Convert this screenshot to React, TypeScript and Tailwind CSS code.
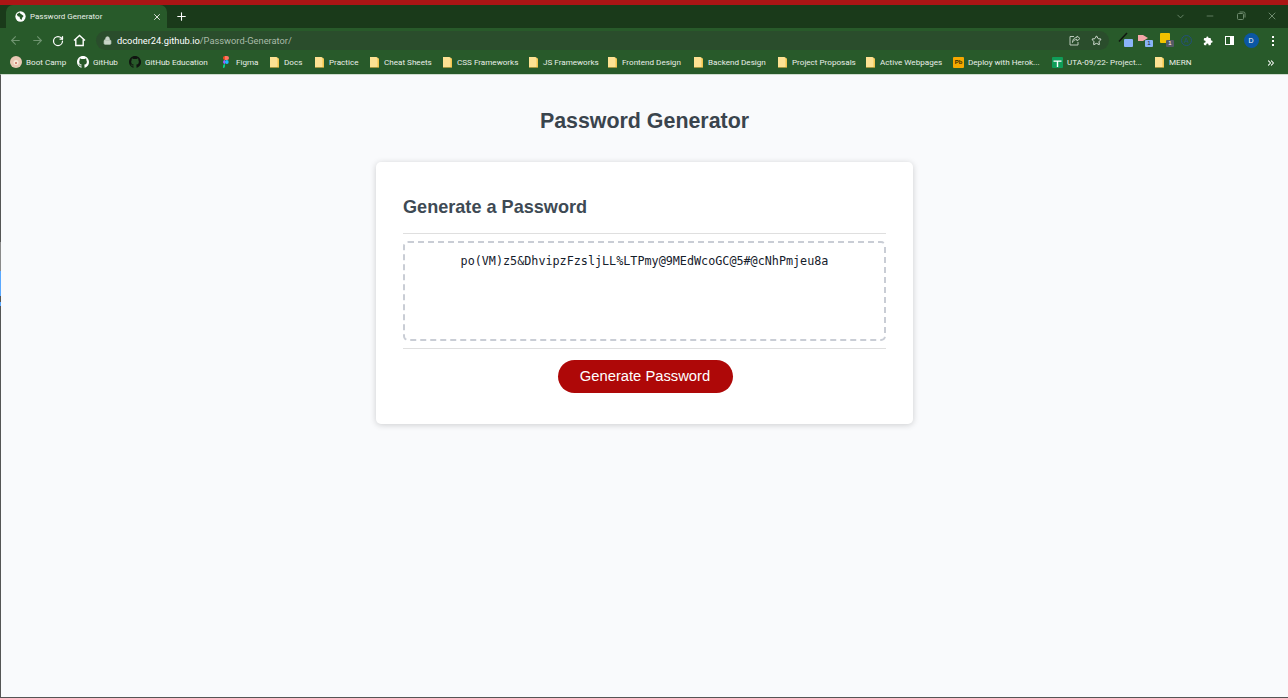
import React from 'react';
import { ArrowLeft, ArrowRight, RotateCw, Lock, Star, X, Plus, ChevronDown, Minus, ChevronsRight } from 'lucide-react';

const Folder = () => (
  <svg width="11" height="12" viewBox="0 0 11 12" className="shrink-0">
    <path d="M1 1h6.500l2.500 2v8H1z" fill="#fde293" />
    <path d="M7.500 1l2.500 2v8H8.500V2.500z" fill="#f3c64f" />
    <path d="M1 11h9v0.7H1z" fill="#d8b24a" />
  </svg>
);

const GithubMark = ({ color }: { color: string }) => (
  <svg width="12" height="12" viewBox="0 0 16 16" fill={color} className="shrink-0">
    <path d="M8 0C3.58 0 0 3.58 0 8c0 3.54 2.29 6.53 5.47 7.59.4.07.55-.17.55-.38 0-.19-.01-.82-.01-1.49-2.01.37-2.53-.49-2.69-.94-.09-.23-.48-.94-.82-1.13-.28-.15-.68-.52-.01-.53.63-.01 1.08.58 1.23.82.72 1.21 1.87.87 2.33.66.07-.52.28-.87.51-1.07-1.78-.2-3.64-.89-3.64-3.95 0-.87.31-1.59.82-2.15-.08-.2-.36-1.02.08-2.12 0 0 .67-.21 2.2.82.64-.18 1.32-.27 2-.27s1.36.09 2 .27c1.53-1.04 2.2-.82 2.2-.82.44 1.1.16 1.92.08 2.12.51.56.82 1.27.82 2.15 0 3.07-1.87 3.75-3.65 3.95.29.25.54.730.54 1.48 0 1.07-.01 1.93-.01 2.2 0 .21.15.46.55.38A8.01 8.01 0 0 0 16 8c0-4.42-3.58-8-8-8z" />
  </svg>
);

const Figma = () => (
  <svg width="12" height="12" viewBox="0 0 12 12" className="shrink-0">
    <circle cx="6.800" cy="6" r="1.900" fill="#1abcfe" />
    <path d="M3 10a2 2 0 0 1 2-2v2a1.900 1.900 0 0 1-2 2z" fill="#0acf83" />
    <path d="M3 6a2 2 0 0 1 2-2v4a2 2 0 0 1-2-2z" fill="#a259ff" />
    <path d="M3 2a2 2 0 0 1 2-2v4a2 2 0 0 1-2-2z" fill="#f24e1e" />
    <path d="M5 0h2a2 2 0 0 1 0 4H5z" fill="#ff7262" />
  </svg>
);

const bookmarks = [
  {
    label: 'Boot Camp',
    width: 'w-[67px]',
    icon: (
      <svg width="12" height="12" viewBox="0 0 12 12" className="shrink-0">
        <circle cx="6" cy="6" r="6" fill="#e9c9b4" />
        <circle cx="6" cy="6.500" r="2.500" fill="#f7ead9" />
        <circle cx="6" cy="7" r="1" fill="#c96a5a" />
      </svg>
    ),
  },
  { label: 'GitHub', width: 'w-[52px]', icon: <GithubMark color="#ffffff" /> },
  { label: 'GitHub Education', width: 'w-[91px]', icon: <GithubMark color="#101510" /> },
  { label: 'Figma', width: 'w-[49px]', icon: <Figma /> },
  { label: 'Docs', width: 'w-[45px]', icon: <Folder /> },
  { label: 'Practice', width: 'w-[55px]', icon: <Folder /> },
  { label: 'Cheat Sheets', width: 'w-[73px]', icon: <Folder /> },
  { label: 'CSS Frameworks', width: 'w-[86px]', icon: <Folder /> },
  { label: 'JS Frameworks', width: 'w-[79px]', icon: <Folder /> },
  { label: 'Frontend Design', width: 'w-[86px]', icon: <Folder /> },
  { label: 'Backend Design', width: 'w-[84px]', icon: <Folder /> },
  { label: 'Project Proposals', width: 'w-[88px]', icon: <Folder /> },
  { label: 'Active Webpages', width: 'w-[88px]', icon: <Folder /> },
  {
    label: 'Deploy with Herok...',
    width: 'w-[99px]',
    icon: <span className="w-[11px] h-[11px] rounded-[1px] bg-[#f5a800] shrink-0 text-[6px] leading-[11px] text-center font-bold text-[#3a2a00]">Pb</span>,
  },
  {
    label: 'UTA-09/22- Project...',
    width: 'w-[102px]',
    icon: (
      <svg width="11" height="11" viewBox="0 0 11 11" className="shrink-0">
        <rect width="11" height="11" rx="1" fill="#0f9d58" />
        <path d="M1.500 3.500h8v1.200H6.200V10H4.800V4.700H1.500z" fill="#fff" />
      </svg>
    ),
  },
  { label: 'MERN', width: '', icon: <Folder /> },
];

export default function App() {
  return (
    <div className="relative h-[698px] w-[1288px] overflow-hidden flex flex-col bg-[#f9fafc] font-['Liberation_Sans',sans-serif]">
      <div className="h-[5px] bg-[#ab1515]" />

      {/* tab strip */}
      <div className="h-[23px] bg-[#1a3a1a] flex items-end pl-[6px]">
        <div className="w-[161px] h-[23px] bg-[#285a2a] rounded-t-[7px] flex items-center pl-[9px] pr-[5px]">
          <svg width="11" height="11" viewBox="0 0 12 12" className="shrink-0">
            <circle cx="6" cy="6" r="5.600" fill="#fff" />
            <path d="M5 1.500l-3 2 1 2.200 2 .6.4 2 1.600 1.500 1-2.800 1.400-1.500-2-1.800L6 3z" fill="#285a2a" />
          </svg>
          <span className="ml-[4px] text-[8px] text-[#e8efe8] font-['Roboto',sans-serif]">Password Generator</span>
          <X size={10} strokeWidth={2} className="ml-auto text-white" />
        </div>
        <Plus size={13} strokeWidth={2} className="ml-[8px] mb-[5px] text-white" />
        <div className="ml-auto flex items-center mb-[6px] pr-[1px] text-[#6d8a6d]">
          <span className="w-[31px] pl-[3px] flex justify-center"><ChevronDown size={11} /></span>
          <span className="w-[31px] flex justify-center"><Minus size={10} /></span>
          <span className="w-[31px] flex justify-center">
            <svg width="10" height="10" viewBox="0 0 10 10" fill="none" stroke="#6d8a6d">
              <rect x="1.500" y="2.500" width="6" height="6" rx="1" />
              <path d="M3.500 1h4a1.500 1.500 0 0 1 1.500 1.500v4" />
            </svg>
          </span>
          <span className="w-[31px] flex justify-center"><X size={12} /></span>
        </div>
      </div>

      {/* toolbar */}
      <div className="h-[22px] bg-[#285a2a] flex items-center pl-[9px] pt-[3px]">
        <ArrowLeft size={13} className="text-[#6f9470]" />
        <ArrowRight size={13} className="ml-[9px] text-[#6f9470]" />
        <RotateCw size={12} strokeWidth={2.500} className="ml-[8px] text-white" />
        <svg width="13" height="13" viewBox="0 0 13 13" fill="none" stroke="#fff" strokeWidth="1.400" className="ml-[9px]">
          <path d="M1 6.500L6.500 1.500L12 6.500M2.800 5.500V11.500H10.200V5.500" />
        </svg>
        <div className="ml-[10px] w-[1013px] h-[19px] rounded-full bg-[#2a4d2c] flex items-center pl-[7px] pr-[6px]">
          <Lock size={9} fill="#c8d4c8" className="text-[#c8d4c8]" />
          <span className="ml-[5px] text-[9.300px] text-white font-['Roboto',sans-serif]">
            dcodner24.github.io<span className="text-[#a9bba9]">/Password-Generator/</span>
          </span>
          <svg width="12" height="11" viewBox="0 0 12 11" fill="none" stroke="#b9c8b9" className="ml-auto mr-[10px]">
            <path d="M8 1l3 2.500L8 6V4.500C5.500 4.500 4 5.500 3.500 7.500 3.500 4.500 5 2.500 8 2.500z" />
            <path d="M5 1.500H1V10h8V7" />
          </svg>
          <Star size={11} strokeWidth={2} className="text-[#e4ebe4] mr-[1px]" />
        </div>

        {/* extensions */}
        <div className="ml-[7px] flex items-center">
          <span className="relative w-[20px] h-[18px]">
            <svg width="10" height="10" viewBox="0 0 10 10" className="absolute left-[2px] top-0" stroke="#101510" strokeWidth="1.500">
              <path d="M1 9.500L9 1" />
            </svg>
            <span className="absolute left-[8px] top-[7px] w-[9px] h-[8px] bg-[#8ab4f8] rounded-[1px]" />
          </span>
          <span className="relative w-[20px] h-[18px]">
            <svg width="10" height="8" viewBox="0 0 10 8" className="absolute left-[2px] top-[2px]">
              <path d="M0 1h5l5 3-5 3H0z" fill="#f4a7a7" />
            </svg>
            <span className="absolute left-[9px] top-[8px] w-[8px] h-[7px] bg-[#8ab4f8] rounded-[1px] text-[6px] leading-[7px] text-center text-[#123]">1</span>
          </span>
          <span className="relative w-[20px] h-[18px]">
            <span className="absolute left-[4px] top-[1px] w-[10px] h-[10px] bg-[#f2c200] rounded-[1px]" />
            <span className="absolute left-[10px] top-[8px] w-[8px] h-[7px] bg-[#555a66] rounded-[1px] text-[6px] leading-[7px] text-center text-white">1</span>
          </span>
          <span className="w-[21px] flex justify-center">
            <span className="w-[11px] h-[11px] rounded-full border border-[#23507a] text-[7px] leading-[9px] text-center text-[#23507a]">A</span>
          </span>
          <span className="w-[22px] flex justify-center">
            <svg width="10" height="10" viewBox="0 0 24 24" fill="#fff">
              <path d="M20.500 11H19V7a2 2 0 0 0-2-2h-4V3.500a2.500 2.500 0 0 0-5 0V5H4a2 2 0 0 0-2 2v3.800h1.500a2.700 2.700 0 0 1 0 5.400H2V20a2 2 0 0 0 2 2h3.800v-1.500a2.700 2.700 0 0 1 5.400 0V22H17a2 2 0 0 0 2-2v-4h1.500a2.500 2.500 0 0 0 0-5z" />
            </svg>
          </span>
          <span className="w-[21px] flex justify-center">
            <span className="w-[9px] h-[9px] bg-white border border-white flex">
              <span className="w-[4px] h-[7px] bg-[#285a2a]" />
            </span>
          </span>
          <span className="w-[22px] flex justify-center">
            <span className="w-[15px] h-[15px] rounded-full bg-[#0b57a4] text-[7px] leading-[15px] text-center text-white">D</span>
          </span>
          <span className="w-[21px] flex flex-col items-center gap-[2px]">
            <span className="w-[2px] h-[2px] bg-white" />
            <span className="w-[2px] h-[2px] bg-white" />
            <span className="w-[2px] h-[2px] bg-white" />
          </span>
        </div>
      </div>

      {/* bookmarks bar */}
      <div className="h-[24px] bg-[#285a2a] flex items-center pl-[10px] pr-[12px] pt-[1px]">
        {bookmarks.map((b, i) => (
          <div className={`flex items-center gap-[4px] shrink-0 ${b.width}`} key={i}>
            {b.icon}
            <span className="text-[8.100px] text-[#e8efe8] whitespace-nowrap font-['Roboto',sans-serif]">{b.label}</span>
          </div>
        ))}
        <ChevronsRight size={10} strokeWidth={2.500} className="text-white ml-auto" />
      </div>

      {/* page */}
      <div className="flex-1 border-l border-[#555] border-b border-b-[#555] border-t border-t-[#cfdccf] flex flex-col items-center">
        <h1 className="mt-[33px] text-[21.400px] leading-[26px] font-bold text-[#3a444d]">Password Generator</h1>
        <div className="mt-[28px] w-[537px] h-[262px] bg-white rounded-[5px] shadow-[0_1px_6px_rgba(0,0,0,0.18)] px-[27px] flex flex-col">
          <h2 className="mt-[33px] h-[24px] text-[18.100px] leading-[24px] font-bold text-[#3e4a54]">Generate a Password</h2>
          <div className="mt-[14px] border-t border-[#dfdfdf] pt-[7px]">
            <div className="h-[100px] border-2 border-dashed border-[#c9cdd5] rounded-[5px] pt-[10px] text-center text-[11.760px] leading-[16px] text-[#15202b] font-['DejaVu_Sans_Mono',monospace]">
              po(VM)z5&amp;DhvipzFzsljLL%LTPmy@9MEdWcoGC@5#@cNhPmjeu8a
            </div>
          </div>
          <div className="mt-[7px] border-t border-[#dfdfdf] flex justify-center pt-[11px]">
            <button className="ml-[1px] w-[175px] h-[33px] rounded-full bg-[#ae0808] text-white text-[14.750px] leading-[33px]">Generate Password</button>
          </div>
        </div>
      </div>

      {/* bits of the desktop showing at the window edge */}
      <div className="absolute left-0 top-[242px] w-px h-[29px] bg-[#8a8a8a]" />
      <div className="absolute left-0 top-[271px] w-px h-[25px] bg-[#5aa8ff]" />
      <div className="absolute left-0 top-[302px] w-px h-[4px] bg-[#5aa8ff]" />
    </div>
  );
}
